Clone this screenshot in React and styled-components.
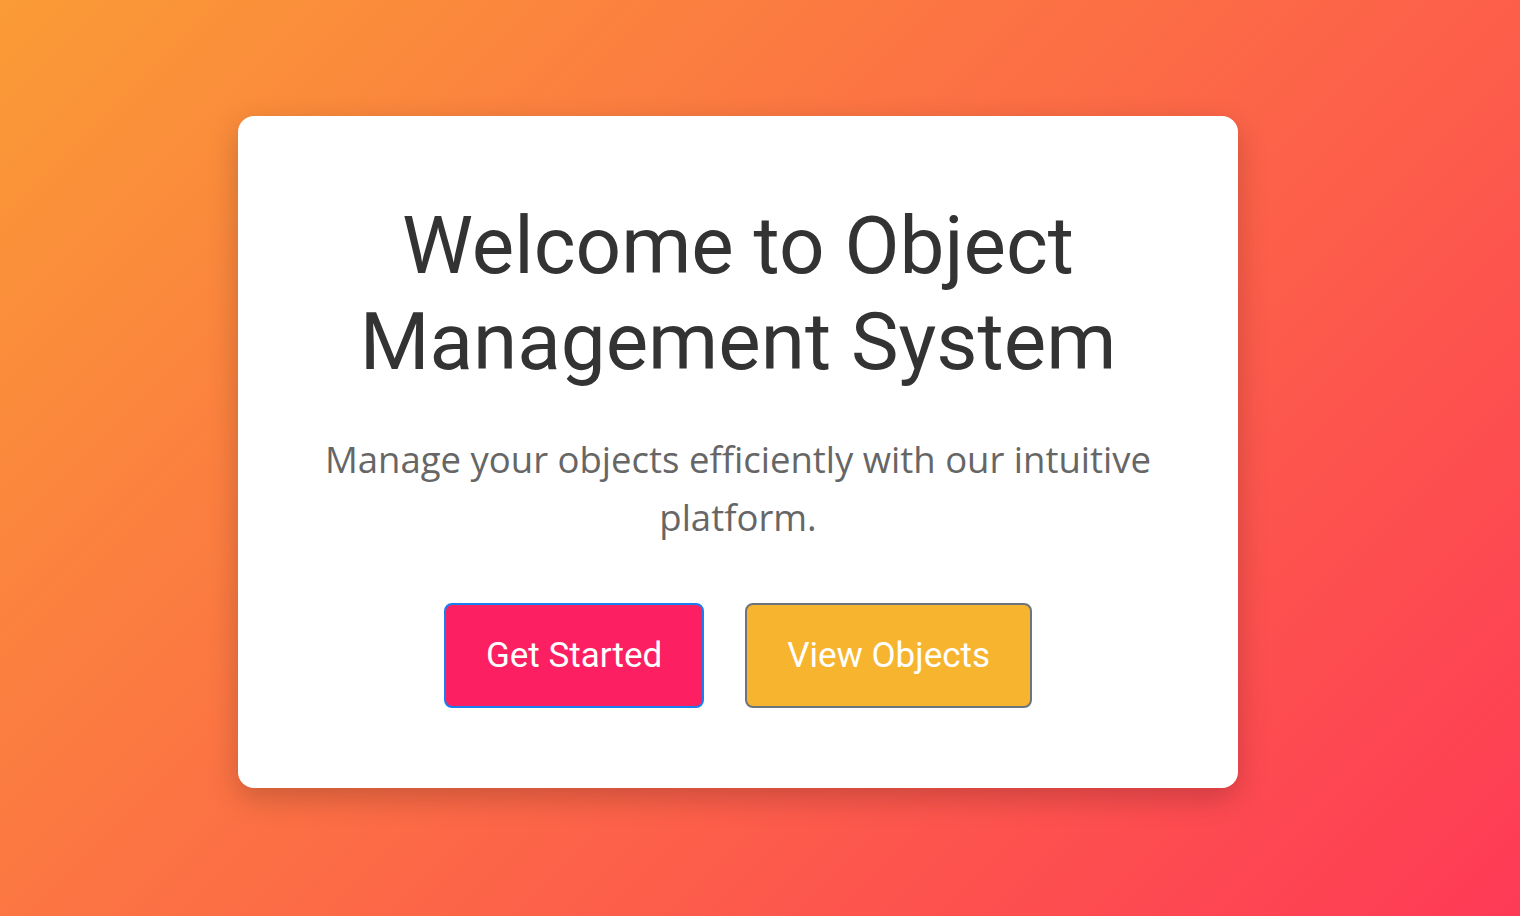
import React from "react";
import styled, { createGlobalStyle } from "styled-components";

const GlobalStyle = createGlobalStyle`
  html, body {
    margin: 0;
    padding: 0;
  }
  body {
    font-family: Roboto, "Liberation Sans", sans-serif;
  }
`;

const Page = styled.div`
  min-height: 916px;
  box-sizing: border-box;
  display: flex;
  align-items: center;
  justify-content: center;
  padding: 0 44px 12px 0;
  background: linear-gradient(135deg, #fa9b36 0%, #fe3a56 100%);
`;

const Card = styled.div`
  width: 1000px;
  box-sizing: border-box;
  padding: 82px 60px 80px;
  background: #ffffff;
  border-radius: 16px;
  box-shadow: 0 10px 30px rgba(0, 0, 0, 0.2);
  text-align: center;
`;

const Heading = styled.h1`
  margin: 0;
  font-family: Roboto, "Liberation Sans", sans-serif;
  font-size: 80px;
  font-weight: 400;
  line-height: 96px;
  color: #333333;
`;

const Subtitle = styled.p`
  margin: 40px auto 0;
  max-width: 860px;
  font-family: "Open Sans", "Noto Sans", sans-serif;
  font-size: 36.5px;
  line-height: 58px;
  color: #666666;
`;

const Actions = styled.div`
  display: flex;
  justify-content: center;
  gap: 41px;
  margin-top: 57px;
`;

const Button = styled.button`
  font-family: Roboto, "Liberation Sans", sans-serif;
  font-size: 35px;
  line-height: 41px;
  color: #ffffff;
  background: ${(p) => p.$bg};
  border: 2px solid ${(p) => p.$border};
  border-radius: 8px;
  padding: 30px 40px;
  cursor: pointer;
`;

export default function App() {
  return (
    <>
      <GlobalStyle />
      <Page>
        <Card>
          <Heading>
            Welcome to Object
            <br />
            Management System
          </Heading>
          <Subtitle>
            Manage your objects efficiently with our intuitive platform.
          </Subtitle>
          <Actions>
            <Button $bg="#fc1f61" $border="#1a7ef0">
              Get Started
            </Button>
            <Button $bg="#f7b42e" $border="#6c757d">
              View Objects
            </Button>
          </Actions>
        </Card>
      </Page>
    </>
  );
}
